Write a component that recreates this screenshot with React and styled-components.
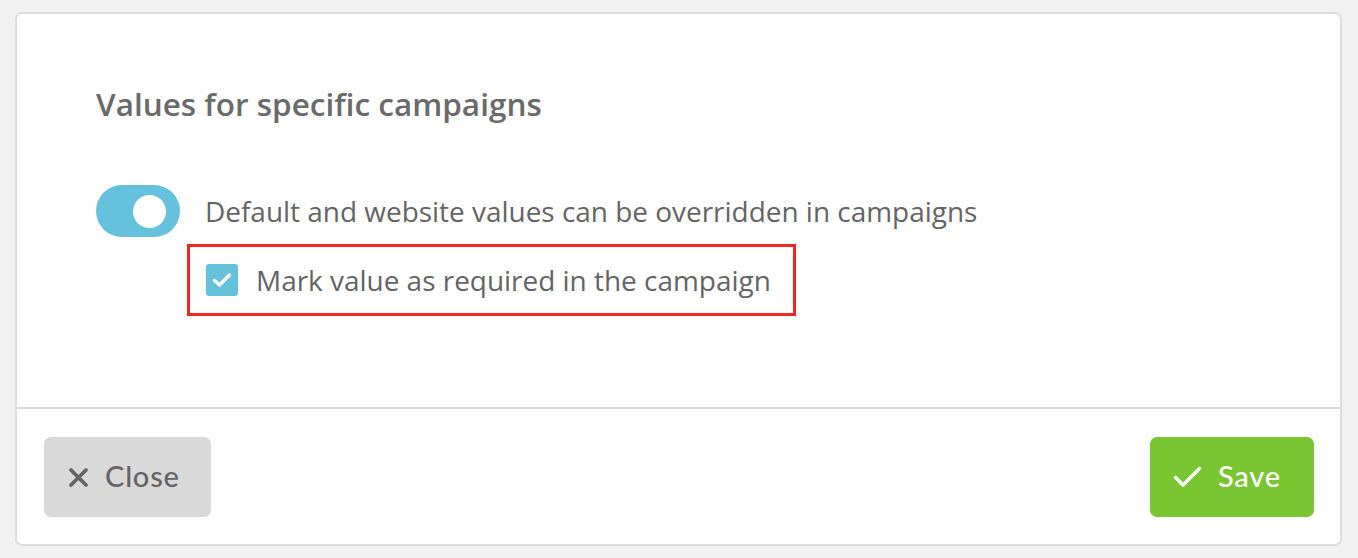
import React, { useState } from 'react'
import styled, { createGlobalStyle } from 'styled-components'

const GlobalStyle = createGlobalStyle`
  html, body {
    margin: 0;
    padding: 0;
    background: #f1f1f1;
  }
  body {
    font-family: "Open Sans", "Liberation Sans", sans-serif;
  }
`

const Page = styled.div`
  padding: 12px 16px 12px 15px;
`

const Card = styled.div`
  background: #fff;
  border: 2px solid #dcdcdc;
  border-radius: 7px;
  height: 534px;
  box-sizing: border-box;
  display: flex;
  flex-direction: column;
`

const Body = styled.div`
  height: 395px;
  box-sizing: border-box;
  padding: 70px 0 0 79px;
  border-bottom: 2px solid #dcdcdc;
`

const Title = styled.h2`
  margin: 0 0 61px;
  font-family: "Open Sans", "Liberation Sans", sans-serif;
  font-weight: 600;
  font-size: 31.5px;
  line-height: 40px;
  color: #6a6a6a;
`

const Row = styled.div`
  display: flex;
  align-items: center;
  gap: 25px;
`

const Toggle = styled.button`
  width: 84px;
  height: 52px;
  border-radius: 26px;
  border: none;
  padding: 0;
  background: ${p => (p.on ? '#66c1dc' : '#cfcfcf')};
  position: relative;
  cursor: pointer;
  flex: none;

  &::after {
    content: '';
    position: absolute;
    top: 10px;
    left: ${p => (p.on ? '37px' : '10px')};
    width: 33px;
    height: 33px;
    border-radius: 50%;
    background: #fff;
  }
`

const Label = styled.span`
  font-size: 27.95px;
  color: #646464;
`

const Highlight = styled.div`
  margin: 7px 0 0 91px;
  width: 609px;
  height: 72px;
  box-sizing: border-box;
  border: 3px solid #f0261f;
  display: flex;
  align-items: center;
  padding-left: 16px;
  gap: 18px;
`

const Check = styled.span`
  width: 32px;
  height: 32px;
  border-radius: 3px;
  background: #66c1dc;
  display: flex;
  align-items: center;
  justify-content: center;
  flex: none;
`

const Footer = styled.div`
  flex: 1;
  display: flex;
  justify-content: space-between;
  align-items: flex-start;
  padding: 28px 26px 0 27px;
`

const Button = styled.button`
  height: 80px;
  border: none;
  border-radius: 7px;
  display: flex;
  align-items: center;
  gap: 16px;
  font-family: "Lato", "Liberation Sans", sans-serif;
  font-size: 29px;
  line-height: 30px;
  letter-spacing: 0.8px;
  font-weight: 500;
  cursor: pointer;
  background: ${p => (p.primary ? '#7ac632' : '#d9d9d9')};
  color: ${p => (p.primary ? '#fff' : '#646464')};
  width: ${p => p.w}px;
  padding: 0 0 3px ${p => p.pl}px;

  svg {
    margin-top: 3px;
  }
`

export default function App() {
  const [on, setOn] = useState(true)
  const [req, setReq] = useState(true)

  return (
    <Page>
      <GlobalStyle />
      <Card>
        <Body>
          <Title>Values for specific campaigns</Title>
          <Row>
            <Toggle on={on ? 1 : 0} onClick={() => setOn(!on)} />
            <Label>Default and website values can be overridden in campaigns</Label>
          </Row>
          <Highlight onClick={() => setReq(!req)}>
            <Check>
              {req && (
                <svg width="22" height="18" viewBox="0 0 22 18">
                  <path d="M3.5 9.5 L8.5 14 L18.5 4" fill="none" stroke="#fff" strokeWidth="3.4" strokeLinecap="round" strokeLinejoin="round" />
                </svg>
              )}
            </Check>
            <Label>Mark value as required in the campaign</Label>
          </Highlight>
        </Body>
        <Footer>
          <Button w={167} pl={24}>
            <svg width="21" height="21" viewBox="0 0 21 21">
              <path d="M3 3 L18 18 M18 3 L3 18" stroke="#646464" strokeWidth="3.8" strokeLinecap="round" />
            </svg>
            Close
          </Button>
          <Button primary w={164} pl={23}>
            <svg width="29" height="22" viewBox="0 0 29 22">
              <path d="M2.5 11.5 L10 19 L26.5 2.5" fill="none" stroke="#fff" strokeWidth="3.4" strokeLinecap="round" strokeLinejoin="round" />
            </svg>
            Save
          </Button>
        </Footer>
      </Card>
    </Page>
  )
}
